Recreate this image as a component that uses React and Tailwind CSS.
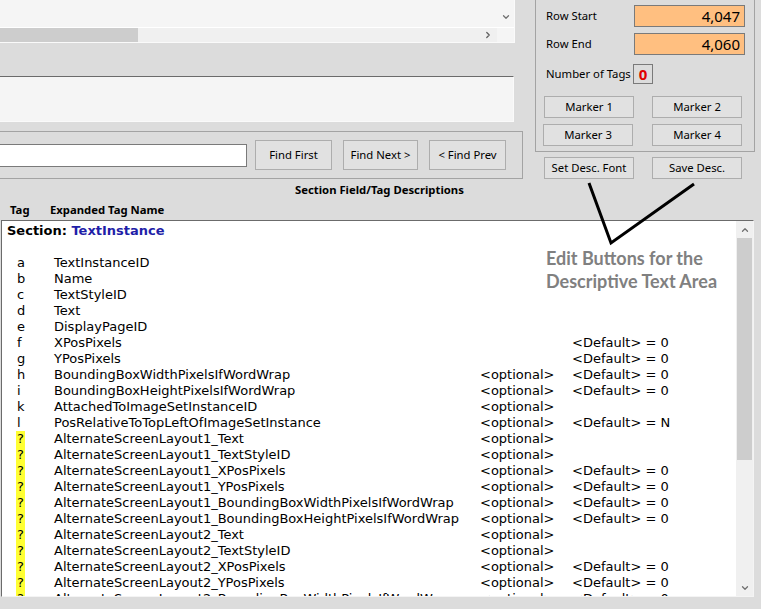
import React from 'react';
import { ChevronDown, ChevronUp, ChevronRight } from 'lucide-react';

const ui = { fontFamily: '"Noto Sans", "Liberation Sans", sans-serif' };
const mono = { fontFamily: '"DejaVu Sans", Verdana, sans-serif' };

const rows = [
  ['a', 'TextInstanceID', '', ''],
  ['b', 'Name', '', ''],
  ['c', 'TextStyleID', '', ''],
  ['d', 'Text', '', ''],
  ['e', 'DisplayPageID', '', ''],
  ['f', 'XPosPixels', '', '<Default> = 0'],
  ['g', 'YPosPixels', '', '<Default> = 0'],
  ['h', 'BoundingBoxWidthPixelsIfWordWrap', '<optional>', '<Default> = 0'],
  ['i', 'BoundingBoxHeightPixelsIfWordWrap', '<optional>', '<Default> = 0'],
  ['k', 'AttachedToImageSetInstanceID', '<optional>', ''],
  ['l', 'PosRelativeToTopLeftOfImageSetInstance', '<optional>', '<Default> = N'],
  ['?', 'AlternateScreenLayout1_Text', '<optional>', ''],
  ['?', 'AlternateScreenLayout1_TextStyleID', '<optional>', ''],
  ['?', 'AlternateScreenLayout1_XPosPixels', '<optional>', '<Default> = 0'],
  ['?', 'AlternateScreenLayout1_YPosPixels', '<optional>', '<Default> = 0'],
  ['?', 'AlternateScreenLayout1_BoundingBoxWidthPixelsIfWordWrap', '<optional>', '<Default> = 0'],
  ['?', 'AlternateScreenLayout1_BoundingBoxHeightPixelsIfWordWrap', '<optional>', '<Default> = 0'],
  ['?', 'AlternateScreenLayout2_Text', '<optional>', ''],
  ['?', 'AlternateScreenLayout2_TextStyleID', '<optional>', ''],
  ['?', 'AlternateScreenLayout2_XPosPixels', '<optional>', '<Default> = 0'],
  ['?', 'AlternateScreenLayout2_YPosPixels', '<optional>', '<Default> = 0'],
  ['?', 'AlternateScreenLayout2_BoundingBoxWidthPixelsIfWordWrap', '<optional>', '<Default> = 0'],
];

const Btn = ({ children, className }) => (
  <div className={`flex items-center justify-center bg-[#e1e1e1] border border-[#adadad] text-[11.3px] text-black whitespace-nowrap ${className}`}>
    {children}
  </div>
);

export default function App() {
  return (
    <div className="relative w-[761px] h-[609px] overflow-hidden bg-[#dcdcdc] text-black" style={ui}>
      {/* Top area */}
      <div className="flex h-[179px]">
        {/* Left column */}
        <div className="w-[523px] flex flex-col">
          <div className="h-[43px] w-[515px] bg-[#f5f5f5] border-r border-b border-[#fafafa] flex flex-col">
            <div className="h-[27px] flex">
              <div className="flex-1" />
              <div className="w-[17px] flex items-end justify-center pb-[5px]">
                <ChevronDown size={10} strokeWidth={3} className="text-[#707070]" />
              </div>
            </div>
            <div className="h-[15px] flex bg-[#f0f0f0] border-t border-white">
              <div className="w-[138px] bg-[#cdcdcd]" />
              <div className="flex-1 flex items-center justify-end pr-[4px]">
                <ChevronRight size={10} strokeWidth={3} className="text-[#606060]" />
              </div>
              <div className="w-[17px] bg-[#f5f5f5]" />
            </div>
          </div>
          <div className="mt-[33px] h-[46px] w-[514px] bg-[#f5f5f5] border-t border-[#6b6b6b] border-b border-b-[#fafafa] border-r border-r-[#fafafa]" />
          <div className="mt-[9px] h-[48px] w-[523px] border-t border-b border-r border-[#a3a3a3] flex items-center">
            <div className="w-[247px] h-[23px] bg-white border-y border-r border-[#7a7a7a]" />
            <Btn className="ml-[8px] w-[77px] h-[30px]">Find First</Btn>
            <Btn className="ml-[11px] w-[75px] h-[30px]">Find Next &gt;</Btn>
            <Btn className="ml-[11px] w-[77px] h-[30px]">&lt; Find Prev</Btn>
          </div>
        </div>

        {/* Right column */}
        <div className="ml-[12px] w-[220px] flex flex-col">
          <div className="h-[152px] border-x border-b border-[#a3a3a3] flex flex-col text-[11.3px] whitespace-nowrap">
            <div className="mt-[5px] h-[22px] flex items-center">
              <div className="w-[98px] pl-[10px]">Row Start</div>
              <div className="w-[111px] h-[22px] bg-[#ffbf80] border border-[#7a7a7a] text-right pr-[4px] text-[15px] leading-[20px]">4,047</div>
            </div>
            <div className="mt-[6px] h-[22px] flex items-center">
              <div className="w-[98px] pl-[10px]">Row End</div>
              <div className="w-[111px] h-[22px] bg-[#ffbf80] border border-[#7a7a7a] text-right pr-[4px] text-[15px] leading-[20px]">4,060</div>
            </div>
            <div className="mt-[9px] h-[20px] flex items-center">
              <div className="w-[97px] pl-[10px]">Number of Tags</div>
              <div className="w-[20px] h-[20px] border border-[#7a7a7a] flex items-center justify-center text-[#e00000] font-bold text-[15px]">0</div>
            </div>
            <div className="mt-[12px] pl-[8px] flex gap-[18px]">
              <Btn className="w-[90px] h-[22px]">Marker 1</Btn>
              <Btn className="w-[90px] h-[22px]">Marker 2</Btn>
            </div>
            <div className="mt-[6px] pl-[7px] flex gap-[19px]">
              <Btn className="w-[90px] h-[22px]">Marker 3</Btn>
              <Btn className="w-[90px] h-[22px]">Marker 4</Btn>
            </div>
          </div>
          <div className="mt-[5px] pl-[9px] flex gap-[18px]">
            <Btn className="w-[90px] h-[22px]">Set Desc. Font</Btn>
            <Btn className="w-[90px] h-[22px]">Save Desc.</Btn>
          </div>
        </div>
      </div>

      {/* Headers */}
      <div className="h-[21px] pl-[295px] text-[11.3px] font-bold leading-[21px]">Section Field/Tag Descriptions</div>
      <div className="h-[20px] flex items-center text-[11.3px] font-bold">
        <span className="pl-[10px] w-[50px]">Tag</span>
        <span>Expanded Tag Name</span>
      </div>

      {/* Description text area */}
      <div className="ml-[1px] w-[753px] h-[377px] bg-white border-t border-l border-[#6b6b6b] border-r border-r-[#f4f4f4] border-b border-b-[#f4f4f4] flex">
        <div className="flex-1 overflow-hidden pt-[2px] text-[13px] leading-[16px] whitespace-nowrap" style={mono}>
          <div className="pl-[5px] font-bold">
            Section: <span className="text-[#1f1fa8]">TextInstance</span>
          </div>
          <div className="h-[16px]" />
          {rows.map((r, i) => (
            <div key={i} className="flex pl-[14px] h-[16px]">
              <div className="w-[38px]">
                <span className={r[0] === '?' ? 'inline-block h-[16px] bg-[#ffff33] px-[1px]' : 'inline-block h-[16px] px-[1px]'}>{r[0]}</span>
              </div>
              <div className="w-[426px]">{r[1]}</div>
              <div className="w-[92px]">{r[2]}</div>
              <div>{r[3]}</div>
            </div>
          ))}
        </div>
        <div className="w-[17px] bg-[#f0f0f0] flex flex-col">
          <div className="h-[17px] flex items-center justify-center">
            <ChevronUp size={10} strokeWidth={3} className="text-[#707070]" />
          </div>
          <div className="h-[222px] mx-[1px] bg-[#cdcdcd]" />
          <div className="flex-1" />
          <div className="h-[17px] flex items-center justify-center">
            <ChevronDown size={10} strokeWidth={3} className="text-[#707070]" />
          </div>
        </div>
      </div>

      {/* Annotation */}
      <div className="absolute left-[546px] top-[247px] text-[18px] leading-[23px] font-bold text-[#808080]" style={{ fontFamily: 'Lato, "Liberation Sans", sans-serif' }}>
        <div>Edit Buttons for the</div>
        <div>Descriptive Text Area</div>
      </div>
      <svg className="absolute left-0 top-0 pointer-events-none" width="761" height="609">
        <polyline points="589,183 611,243 694,184" fill="none" stroke="#000" strokeWidth="3" />
      </svg>
    </div>
  );
}
